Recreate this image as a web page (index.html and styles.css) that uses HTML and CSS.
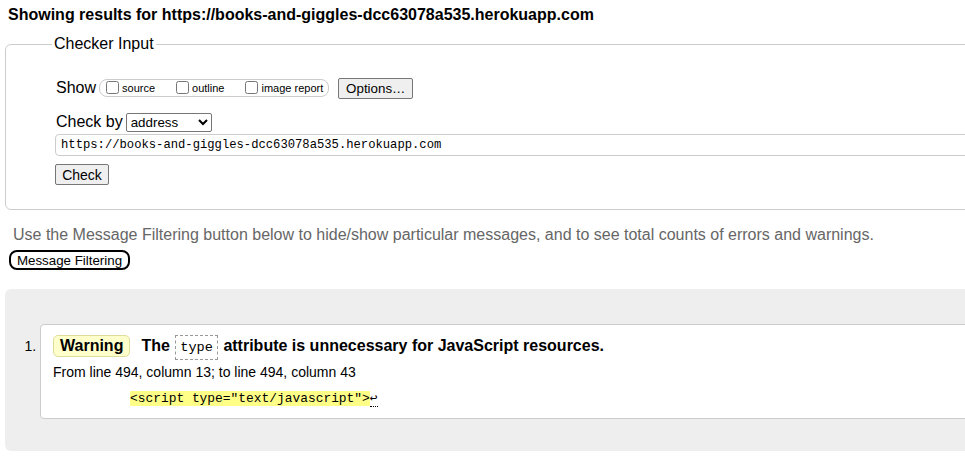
FILE: index.html
```html
<!DOCTYPE html>
<html>
<head>
<meta charset="utf-8">
<title>Showing results for https://books-and-giggles-dcc63078a535.herokuapp.com - Nu Html Checker</title>
<link rel="stylesheet" href="styles.css">
</head>
<body>
<h2 class="title">Showing results for https://books-and-giggles-dcc63078a535.herokuapp.com</h2>
<form class="checker">
  <fieldset class="input-box">
    <legend class="input-legend">Checker Input</legend>
    <div class="show-row">
      <span class="show-label">Show</span>
      <fieldset class="show-group">
        <label class="opt"><input type="checkbox" class="cb">source</label>
        <label class="opt"><input type="checkbox" class="cb">outline</label>
        <label class="opt"><input type="checkbox" class="cb">image report</label>
      </fieldset>
      <button type="button" class="btn options-btn">Options…</button>
    </div>
    <div class="checkby-row">
      <span class="checkby-label">Check by</span>
      <select class="checkby-select"><option>address</option></select>
    </div>
    <div class="url-row">
      <input class="url-input" type="text" value="https://books-and-giggles-dcc63078a535.herokuapp.com">
    </div>
    <div class="submit-row">
      <button type="button" class="btn check-btn">Check</button>
    </div>
  </fieldset>
</form>
<p class="filter-note">Use the Message Filtering button below to hide/show particular messages, and to see total counts of errors and warnings.</p>
<div class="filter-row"><button type="button" class="filter-btn">Message Filtering</button></div>
<div class="results">
  <ol class="msg-list">
    <li class="msg">
      <div class="msg-card">
        <p class="msg-head"><span class="badge">Warning</span> <span class="msg-text">The <code class="attr">type</code> attribute is unnecessary for JavaScript resources.</span></p>
        <p class="location">From line 494, column 13; to line 494, column 43</p>
        <p class="extract"><code class="extract-code"><b class="hl">&lt;script type="text/javascript"&gt;</b><span class="lf">↩</span></code></p>
      </div>
    </li>
  </ol>
</div>
</body>
</html>
```
FILE: styles.css
```css
html, body {
  margin: 0;
  padding: 0;
  overflow: hidden;
  background: #fff;
}
body {
  font-family: "Liberation Sans", Arial, sans-serif;
  color: #000;
  width: 1200px;
}
.title {
  font-size: 16px;
  font-weight: bold;
  line-height: 19px;
  margin: 5px 0 0 8px;
}
.checker {
  margin: 11px 0 0 5px;
}
.input-box {
  border: 1px solid #ccc;
  border-radius: 6px;
  margin: 0;
  padding: 19px 0 24px 49px;
  width: 1100px;
}
.input-legend {
  font-size: 16px;
  margin-left: -3px;
  padding: 0 2px;
}
.show-row {
  display: flex;
  align-items: center;
  gap: 0;
  height: 22px;
  margin-top: 5px;
}
.show-label {
  font-size: 16px;
  margin-left: 1px;
  margin-right: 3px;
}
.show-group {
  display: flex;
  align-items: center;
  border: 1px solid #ccc;
  border-radius: 8px;
  margin: 0;
  padding: 0 5px 0 5px;
  height: 16px;
}
.opt {
  display: flex;
  align-items: center;
  font-size: 11px;
  margin-right: 20px;
}
.opt:last-child { margin-right: 0; }
.cb {
  margin: 0 3px 1px 1px;
  width: 13px;
  height: 13px;
}
.btn {
  font-family: "Liberation Sans", Arial, sans-serif;
  font-size: 13.33px;
  background: #efefef;
  border: 1px solid #767676;
  border-radius: 2px;
  color: #000;
  padding: 1px 6px;
  height: 21px;
}
.options-btn {
  margin-left: 9px;
  width: 75px;
}
.checkby-row {
  display: flex;
  align-items: center;
  margin-top: 12px;
  height: 22px;
}
.checkby-label {
  font-size: 16px;
  margin-left: 1px;
  margin-right: 3px;
}
.checkby-select {
  font-family: "Liberation Sans", Arial, sans-serif;
  font-size: 13.33px;
  width: 86px;
  height: 19px;
  border: 1px solid #767676;
  border-radius: 2px;
  background: #fff;
  color: #000;
}
.url-row {
  margin-top: 1px;
}
.url-input {
  font-family: "Liberation Mono", "DejaVu Sans Mono", monospace;
  font-size: 12.2px;
  width: 1000px;
  height: 22px;
  box-sizing: border-box;
  border: 1px solid #ccc;
  border-radius: 4px;
  padding: 0 5px;
  color: #000;
}
.submit-row {
  margin-top: 8px;
}
.check-btn {
  width: 54px;
  height: 21px;
  font-size: 14px;
}
.filter-note {
  font-size: 16px;
  color: #666;
  margin: 15px 0 0 13px;
  line-height: 19px;
}
.filter-row {
  margin: 6px 0 0 9px;
}
.filter-btn {
  font-family: "Liberation Sans", Arial, sans-serif;
  font-size: 13.33px;
  background: #fff;
  border: 2px solid #000;
  border-radius: 8px;
  padding: 0 5px;
  height: 20px;
  width: 121px;
  color: #000;
}
.results {
  margin: 19px 0 0 5px;
  background: #eee;
  border-radius: 6px 0 0 6px;
  padding: 35px 0 32px 0;
}
.msg-list {
  margin: 0;
  padding: 0 0 0 35px;
  font-size: 14px;
}
.msg::marker {
  content: "1. ";
  font-size: 14px;
}
.msg-card {
  background: #fff;
  border: 1px solid #ccc;
  border-radius: 4px;
  padding: 7px 12px 10px 12px;
  width: 1050px;
}
.msg-head {
  margin: 0;
  font-size: 16px;
  font-weight: bold;
  display: flex;
  align-items: center;
  height: 27px;
}
.badge {
  background: #ffc;
  border: 1px solid #dd9;
  border-radius: 5px;
  padding: 1px 6px 1px 6px;
  margin-right: 11px;
  line-height: 18px;
}
.attr {
  font-family: "Liberation Mono", "DejaVu Sans Mono", monospace;
  font-weight: normal;
  font-size: 13.6px;
  border: 1px dashed #999;
  padding: 4px 4px;
  margin: 0 1px;
}
.location {
  margin: 5px 0 0 0;
  font-size: 14px;
  line-height: 17px;
}
.extract {
  margin: 8px 0 0 77px;
  line-height: 18px;
  font-size: 13px;
}
.extract-code {
  font-family: "Liberation Mono", "DejaVu Sans Mono", monospace;
  font-size: 12.9px;
}
.hl {
  background: #ff8;
  font-weight: normal;
}
.lf {
  border-bottom: 1px dotted #000;
}
```
